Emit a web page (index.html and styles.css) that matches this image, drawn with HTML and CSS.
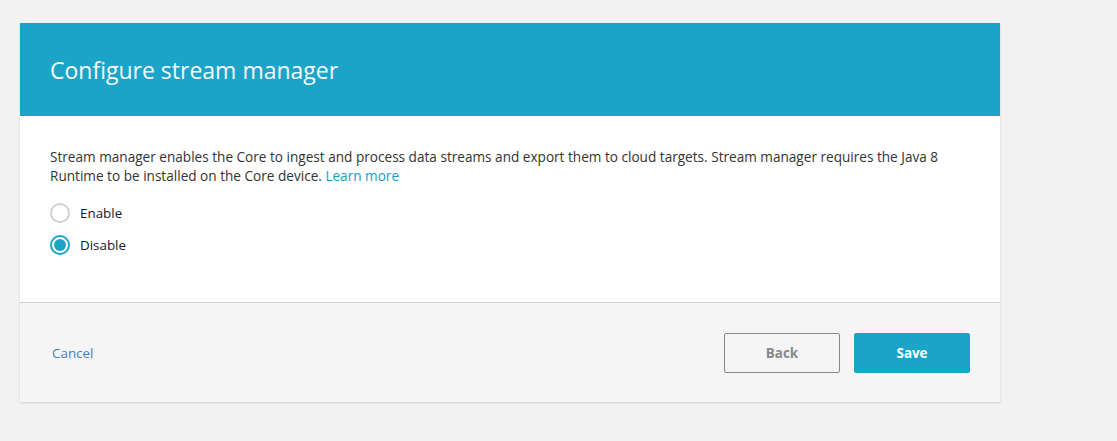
FILE: index.html
```html
<!DOCTYPE html>
<html>
<head>
<meta charset="utf-8">
<link rel="stylesheet" href="styles.css">
</head>
<body>
<div class="card">
  <div class="header"><h1 class="title">Configure stream manager</h1></div>
  <div class="body">
    <p class="desc">Stream manager enables the Core to ingest and process data streams and export them to cloud targets. Stream manager requires the Java 8 Runtime to be installed on the Core device. <a class="link" href="#">Learn more</a></p>
    <div class="radios">
      <label class="radio"><span class="dot"></span><span class="label">Enable</span></label>
      <label class="radio"><span class="dot checked"></span><span class="label">Disable</span></label>
    </div>
  </div>
  <div class="footer">
    <a class="cancel" href="#">Cancel</a>
    <div class="actions">
      <button class="btn back">Back</button>
      <button class="btn save">Save</button>
    </div>
  </div>
</div>
</body>
</html>
```
FILE: styles.css
```css
html, body { margin: 0; padding: 0; }
body {
  background: #f2f2f2;
  font-family: "Open Sans", "Noto Sans", sans-serif;
  padding: 23px 0 0 20px;
  height: 441px;
  box-sizing: border-box;
}
.card {
  width: 980px;
  background: #fff;
  box-shadow: 0 1px 2px rgba(0,0,0,0.15);
}
.header {
  background: #1ba4c8;
  height: 93px;
  display: flex;
  align-items: center;
  padding: 0 30px;
}
.title {
  margin: 0;
  font-weight: 400;
  font-size: 23px;
  color: #f4fafd;
}
.body {
  padding: 31px 30px 47px;
}
.desc {
  margin: 0;
  font-size: 13.6px;
  line-height: 19px;
  color: #333;
}
.link { color: #1a9bc4; text-decoration: none; }
.radios {
  margin-top: 18px;
  display: flex;
  flex-direction: column;
  gap: 12px;
}
.radio {
  display: flex;
  align-items: center;
  gap: 10px;
  font-size: 13.4px;
  color: #16191f;
  height: 20px;
}
.dot {
  width: 20px; height: 20px;
  border-radius: 50%;
  border: 2px solid #d0d0d0;
  box-sizing: border-box;
  background: #fff;
  position: relative;
}
.dot.checked { border-color: #1ba4c8; }
.dot.checked::after {
  content: "";
  position: absolute;
  left: 2px; top: 2px;
  width: 12px; height: 12px;
  border-radius: 50%;
  background: #1ba4c8;
}
.footer {
  border-top: 1px solid #cfcfcf;
  background: #f5f5f5;
  height: 99px;
  display: flex;
  align-items: center;
  justify-content: space-between;
  padding: 0 30px 0 32px;
}
.cancel {
  color: #3f7fb8;
  font-size: 13.4px;
  text-decoration: none;
}
.actions { display: flex; gap: 14px; }
.btn {
  width: 116px;
  height: 40px;
  border-radius: 2px;
  font-family: inherit;
  font-size: 13.4px;
  font-weight: 700;
  box-sizing: border-box;
}
.back {
  background: transparent;
  border: 1px solid #8a8a8a;
  color: #888;
}
.save {
  background: #1ba4c8;
  border: 1px solid #1ba4c8;
  color: #fff;
}
```
